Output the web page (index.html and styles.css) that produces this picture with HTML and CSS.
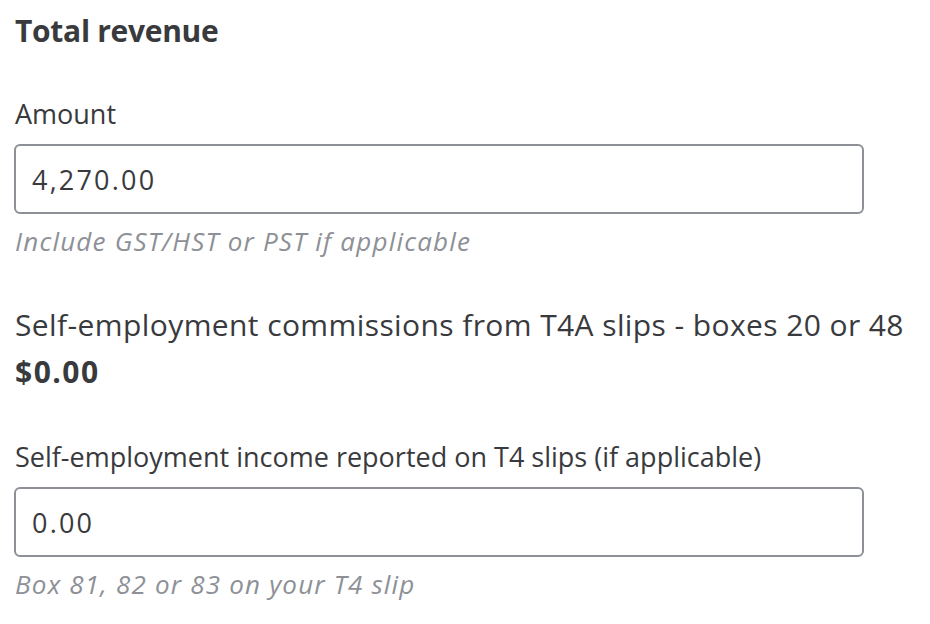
FILE: index.html
```html
<!DOCTYPE html>
<html lang="en">
<head>
<meta charset="utf-8">
<link rel="stylesheet" href="styles.css">
</head>
<body>
<main class="form">
  <h2 class="title">Total revenue</h2>
  <div class="field first">
    <label class="label">Amount</label>
    <div class="input">4,270.00</div>
    <p class="help">Include GST/HST or PST if applicable</p>
  </div>
  <div class="summary">
    <p class="summary-label">Self-employment commissions from T4A slips - boxes 20 or 48</p>
    <p class="summary-value">$0.00</p>
  </div>
  <div class="field second">
    <label class="label">Self-employment income reported on T4 slips (if applicable)</label>
    <div class="input">0.00</div>
    <p class="help">Box 81, 82 or 83 on your T4 slip</p>
  </div>
</main>
</body>
</html>
```
FILE: styles.css
```css
* { box-sizing: border-box; }
html, body { margin: 0; padding: 0; background: #fff; }
body {
  font-family: "Open Sans", "Noto Sans", sans-serif;
  color: #393a3d;
}
.form {
  width: 850px;
  margin-left: 14px;
  padding-top: 11px;
}
.title {
  margin: 0 0 0 1px;
  font-size: 30px;
  font-weight: 700;
  line-height: 40px;
  letter-spacing: -0.3px;
}
.field.first { margin-top: 45px; }
.field.second { margin-top: 47px; }
.label {
  display: block;
  font-size: 27px;
  line-height: 36px;
  padding-left: 1px;
  white-space: nowrap;
}
.input {
  margin-top: 12px;
  height: 70px;
  border: 2px solid #8d9096;
  border-radius: 6px;
  padding: 0 16px;
  display: flex;
  align-items: center;
  font-size: 27px;
  letter-spacing: 2.2px;
}
.help {
  margin: 10px 0 0 1px;
  font-size: 26px;
  font-style: italic;
  color: #8d9096;
  line-height: 34px;
  letter-spacing: 1.2px;
}
.summary { margin-top: 47px; }
.summary-label {
  margin: 0 0 0 1px;
  font-size: 30px;
  line-height: 40px;
  letter-spacing: 0.4px;
  white-space: nowrap;
}
.summary-value {
  margin: 7px 0 0 1px;
  font-size: 30px;
  font-weight: 700;
  line-height: 40px;
  letter-spacing: 1.5px;
}
```
